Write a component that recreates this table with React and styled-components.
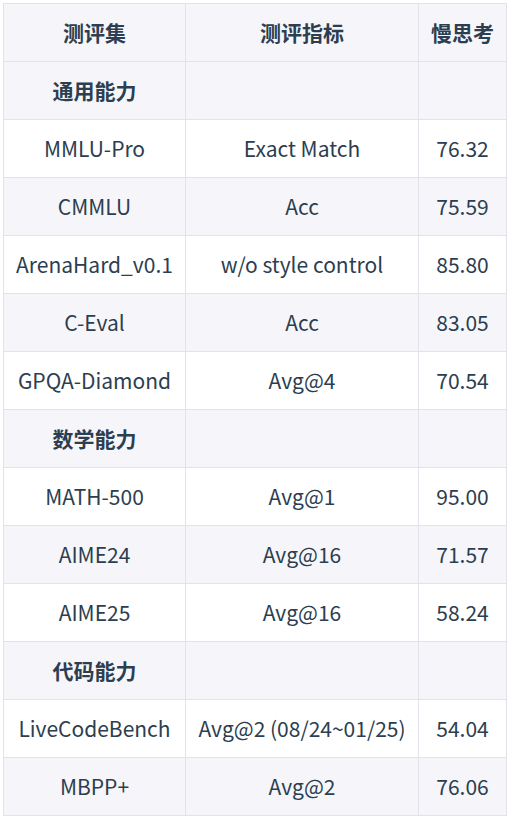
import React from 'react';
import styled, { createGlobalStyle } from 'styled-components';

const GlobalStyle = createGlobalStyle`
  html, body {
    margin: 0;
    padding: 0;
    background: #ffffff;
  }
  body {
    font-family: "Noto Sans CJK SC", "Noto Sans", sans-serif;
    color: #2c3e50;
  }
`;

const Page = styled.div`
  padding: 3px 4px 3px 3px;
`;

const Table = styled.table`
  border-collapse: collapse;
  table-layout: fixed;
  width: 503px;
  font-size: 21px;
  line-height: 34px;
`;

const Col = styled.col`
  width: ${(p) => p.$w}px;
`;

const Row = styled.tr`
  background: #ffffff;

  tbody &:nth-child(odd) {
    background: #f6f6fa;
  }

  thead & {
    background: #f6f6fa;
  }
`;

const Cell = styled.td`
  border: 1px solid #e2e2ea;
  padding: 11px 4px 12px;
  text-align: center;
  white-space: nowrap;
  font-weight: ${(p) => (p.$bold ? 700 : 400)};
`;

const HeadCell = styled.th`
  border: 1px solid #e2e2ea;
  padding: 11px 4px 12px;
  text-align: center;
  font-weight: 700;
`;

const sections = [
  {
    title: '通用能力',
    rows: [
      ['MMLU-Pro', 'Exact Match', '76.32'],
      ['CMMLU', 'Acc', '75.59'],
      ['ArenaHard_v0.1', 'w/o style control', '85.80'],
      ['C-Eval', 'Acc', '83.05'],
      ['GPQA-Diamond', 'Avg@4', '70.54'],
    ],
  },
  {
    title: '数学能力',
    rows: [
      ['MATH-500', 'Avg@1', '95.00'],
      ['AIME24', 'Avg@16', '71.57'],
      ['AIME25', 'Avg@16', '58.24'],
    ],
  },
  {
    title: '代码能力',
    rows: [
      ['LiveCodeBench', 'Avg@2 (08/24~01/25)', '54.04'],
      ['MBPP+', 'Avg@2', '76.06'],
    ],
  },
];

const App = () => {
  return (
    <Page>
      <GlobalStyle />
      <Table>
        <colgroup>
          <Col $w={182} />
          <Col $w={233} />
          <Col $w={88} />
        </colgroup>
        <thead>
          <Row>
            <HeadCell>测评集</HeadCell>
            <HeadCell>测评指标</HeadCell>
            <HeadCell>慢思考</HeadCell>
          </Row>
        </thead>
        <tbody>
          {sections.map((s) => (
            <React.Fragment key={s.title}>
              <Row>
                <Cell $bold>{s.title}</Cell>
                <Cell />
                <Cell />
              </Row>
              {s.rows.map((r) => (
                <Row key={r[0]}>
                  <Cell>{r[0]}</Cell>
                  <Cell>{r[1]}</Cell>
                  <Cell>{r[2]}</Cell>
                </Row>
              ))}
            </React.Fragment>
          ))}
        </tbody>
      </Table>
    </Page>
  );
};

export default App;
